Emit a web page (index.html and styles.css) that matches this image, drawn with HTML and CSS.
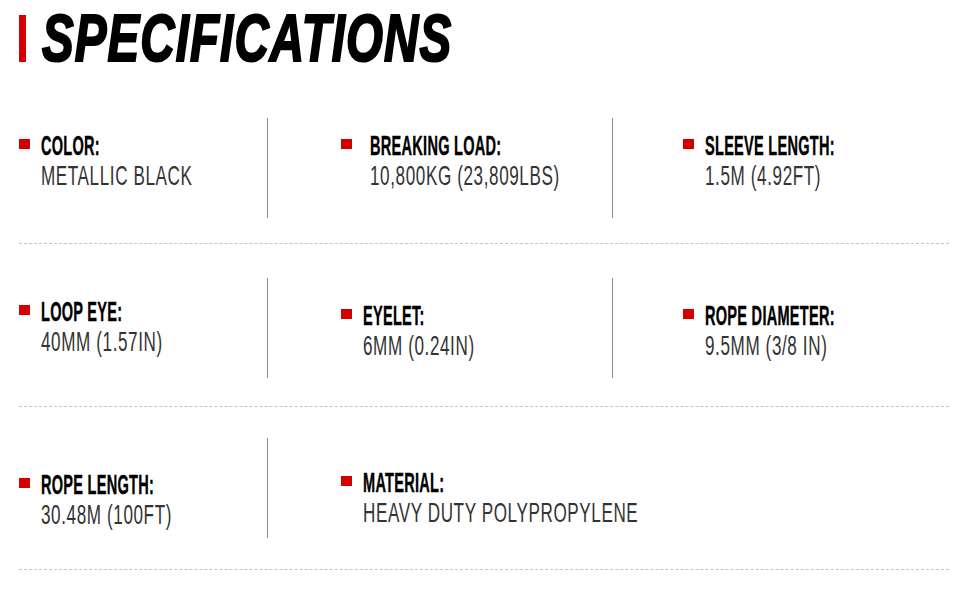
FILE: index.html
```html
<!DOCTYPE html>
<html lang="en">
<head>
<meta charset="utf-8">
<title>Specifications</title>
<link rel="stylesheet" href="styles.css">
</head>
<body>
<div class="page">
  <header class="title">
    <span class="title-bar"></span>
    <h1 class="title-text">SPECIFICATIONS</h1>
  </header>
  <section class="specs">
    <div class="row row-1">
      <div class="cell cell-a divided">
        <div class="item"><span class="bullet"></span><div class="text"><div class="label">COLOR:</div><div class="value">METALLIC BLACK</div></div></div>
      </div>
      <div class="cell cell-b divided">
        <div class="item"><span class="bullet"></span><div class="text text-indent"><div class="label">BREAKING LOAD:</div><div class="value">10,800KG (23,809LBS)</div></div></div>
      </div>
      <div class="cell cell-c">
        <div class="item"><span class="bullet"></span><div class="text"><div class="label">SLEEVE LENGTH:</div><div class="value">1.5M (4.92FT)</div></div></div>
      </div>
    </div>
    <div class="row row-2">
      <div class="cell cell-a divided">
        <div class="item"><span class="bullet"></span><div class="text"><div class="label">LOOP EYE:</div><div class="value">40MM (1.57IN)</div></div></div>
      </div>
      <div class="cell cell-b divided shift">
        <div class="item"><span class="bullet"></span><div class="text"><div class="label">EYELET:</div><div class="value">6MM (0.24IN)</div></div></div>
      </div>
      <div class="cell cell-c shift">
        <div class="item"><span class="bullet"></span><div class="text"><div class="label">ROPE DIAMETER:</div><div class="value">9.5MM (3/8 IN)</div></div></div>
      </div>
    </div>
    <div class="row row-3">
      <div class="cell cell-a divided">
        <div class="item"><span class="bullet"></span><div class="text"><div class="label">ROPE LENGTH:</div><div class="value">30.48M (100FT)</div></div></div>
      </div>
      <div class="cell cell-b">
        <div class="item"><span class="bullet"></span><div class="text"><div class="label">MATERIAL:</div><div class="value">HEAVY DUTY POLYPROPYLENE</div></div></div>
      </div>
    </div>
  </section>
</div>
</body>
</html>
```

FILE: styles.css
```css
* { box-sizing: border-box; }

html, body {
  margin: 0;
  padding: 0;
  background: #ffffff;
}

body {
  font-family: "Liberation Sans", Arial, sans-serif;
  color: #111;
}

.page {
  width: 970px;
  height: 600px;
  overflow: hidden;
}

.title {
  display: flex;
  align-items: flex-start;
  gap: 16px;
  padding: 15px 0 0 19px;
  height: 84px;
}

.title-bar {
  display: block;
  width: 7px;
  height: 47px;
  background: #d40000;
}

.title-text {
  margin: 0;
  font-family: "Liberation Sans", Arial, sans-serif;
  font-weight: 700;
  font-style: italic;
  font-size: 66px;
  line-height: 47px;
  letter-spacing: 1.5px;
  color: #000;
  -webkit-text-stroke: 2.2px #000;
  transform: scaleX(0.72);
  transform-origin: left top;
  white-space: nowrap;
}

.specs {
  margin-left: 19px;
  width: 930px;
}

.row {
  display: flex;
  border-bottom: 1px dashed #c4c4c4;
}

.row-1 { padding: 34px 0 25px; }
.row-2 { padding: 34px 0 28px; }
.row-3 { padding: 31px 0 31px; }

.cell {
  height: 100px;
  flex-shrink: 0;
  min-width: 0;
}

.divided {
  border-right: 1px solid #8c8c8c;
}

.cell-a {
  width: 249px;
  padding-left: 0;
}

.cell-b {
  width: 345px;
  padding-left: 73px;
}

.cell-c {
  flex: 1 1 0;
  padding-left: 70px;
}

.row-1 .cell { padding-top: 13px; }
.row-2 .cell { padding-top: 19px; }
.row-2 .cell.shift { padding-top: 23px; }
.row-3 .cell { padding-top: 32px; }
.row-3 .cell-b { padding-top: 30px; }

.item {
  display: flex;
  align-items: flex-start;
  gap: 11px;
}

.bullet {
  flex: none;
  width: 11px;
  height: 10px;
  margin-top: 8px;
  background: #d40000;
}

.text {
  white-space: nowrap;
}

.text-indent {
  padding-left: 7px;
}

.label,
.value {
  font-size: 28px;
  line-height: 30px;
  transform-origin: left top;
}

.label {
  font-weight: 700;
  color: #000;
  letter-spacing: 0.5px;
  -webkit-text-stroke: 0.4px #000;
  transform: scaleX(0.52);
}

.value {
  font-weight: 400;
  color: #333;
  letter-spacing: 1px;
  transform: scaleX(0.61);
}
```
